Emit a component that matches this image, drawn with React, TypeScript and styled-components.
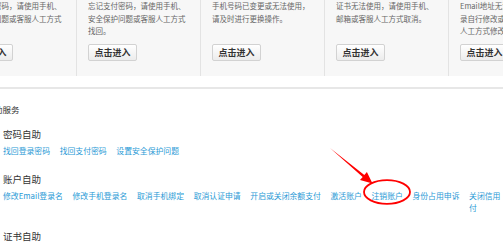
import React from 'react';
import styled, { createGlobalStyle } from 'styled-components';

const GlobalStyle = createGlobalStyle`
    html, body {
        margin: 0;
        padding: 0;
        background: #ffffff;
        overflow: hidden;
    }
    body {
        font-family: "Noto Sans CJK SC", "Noto Sans", sans-serif;
    }
`;

const cards: string[][] = [
    ['忘记登录密码，请使用手机、', '安全保护问题或客服人工方式'],
    ['忘记支付密码，请使用手机、', '安全保护问题或客服人工方式', '找回。'],
    ['手机号码已变更或无法使用，', '请及时进行更换操作。'],
    ['证书无法使用，请使用手机、', '邮箱或客服人工方式取消。'],
    ['Email地址无法使用，请登', '录自行修改或通过客服', '人工方式修改。'],
];

const groups = [
    {
        title: '密码自助',
        links: ['找回登录密码', '找回支付密码', '设置安全保护问题'],
    },
    {
        title: '账户自助',
        links: [
            '修改Email登录名',
            '修改手机登录名',
            '取消手机绑定',
            '取消认证申请',
            '开启或关闭余额支付',
            '激活账户',
            '注销账户',
            '身份占用申诉',
            '关闭信用付',
        ],
    },
    {
        title: '证书自助',
        links: [],
    },
];

const App: React.FC = () => {
    return (
        <>
            <GlobalStyle />
            <Page>
                <CardStrip>
                    {cards.map((lines, i) => (
                        <Card key={i}>
                            <CardText>
                                {lines.map((line, j) => (
                                    <div key={j}>{line}</div>
                                ))}
                            </CardText>
                            <EnterButton>点击进入</EnterButton>
                        </Card>
                    ))}
                </CardStrip>

                <Rule />

                <Services>
                    <ServiceTitle>自助服务</ServiceTitle>
                    {groups.map((g, i) => (
                        <Group key={g.title} $first={i === 0}>
                            <GroupTitle>{g.title}</GroupTitle>
                            {g.links.length > 0 && (
                                <LinkRow>
                                    {g.links.map((l, k) => (
                                        <ServiceLink key={l} $last={k === g.links.length - 1 && g.links.length > 5}>
                                            {l}
                                        </ServiceLink>
                                    ))}
                                </LinkRow>
                            )}
                        </Group>
                    ))}
                </Services>

                <Annotation width="503" height="245" viewBox="0 0 503 245">
                    <polygon
                        points="330,148 364.3,175 366.9,172 372.5,183.5 360,180 362.7,177"
                        fill="#ff0000"
                    />
                    <ellipse cx="387" cy="192" rx="23" ry="11.8" fill="none" stroke="#ff0000" strokeWidth="1.8" />
                </Annotation>
            </Page>
        </>
    );
};

export default App;

const Page = styled.div`
    position: relative;
    width: 503px;
    height: 245px;
    overflow: hidden;
    background: #ffffff;
`;

const CardStrip = styled.div`
    display: flex;
    height: 76px;
    margin-left: -47px;
    background: #f7f7f7;
`;

const Card = styled.div`
    flex-shrink: 0;
    width: 124px;
    box-sizing: border-box;
    padding: 0 0 0 11px;
    border-right: 1px solid #e3e3e3;
    overflow: hidden;
`;

const CardText = styled.div`
    height: 38px;
    font-size: 7.5px;
    line-height: 12.5px;
    color: #666666;
    white-space: nowrap;
`;

const EnterButton = styled.button`
    display: flex;
    align-items: center;
    justify-content: center;
    width: 49px;
    height: 17px;
    margin-top: 6px;
    padding: 0;
    border: 1px solid #d2d2d2;
    border-radius: 2px;
    background: linear-gradient(#ffffff, #ececec);
    font-family: "Noto Sans CJK SC", sans-serif;
    font-size: 9px;
    font-weight: 600;
    color: #333333;
    box-sizing: border-box;
`;

const Rule = styled.div`
    height: 2px;
    margin-top: 11px;
    background: #e7e7e7;
`;

const Services = styled.div`
    padding-left: 3px;
`;

const ServiceTitle = styled.div`
    margin-top: 14px;
    margin-left: -17.5px;
    font-size: 8.5px;
    line-height: 12px;
    color: #333333;
`;

const Group = styled.div<{ $first?: boolean }>`
    margin-top: ${(p) => (p.$first ? '13px' : '16px')};
`;

const GroupTitle = styled.div`
    font-size: 9.5px;
    line-height: 13px;
    color: #333333;
`;

const LinkRow = styled.div`
    display: flex;
    gap: 9.6px;
    margin-top: 4px;
`;

const ServiceLink = styled.a<{ $last?: boolean }>`
    flex-shrink: 0;
    width: ${(p) => (p.$last ? '33px' : 'auto')};
    font-size: 7.85px;
    line-height: 12px;
    color: #2a9ad6;
    white-space: ${(p) => (p.$last ? 'normal' : 'nowrap')};
    cursor: pointer;
`;

const Annotation = styled.svg`
    position: absolute;
    left: 0;
    top: 0;
    pointer-events: none;
`;
